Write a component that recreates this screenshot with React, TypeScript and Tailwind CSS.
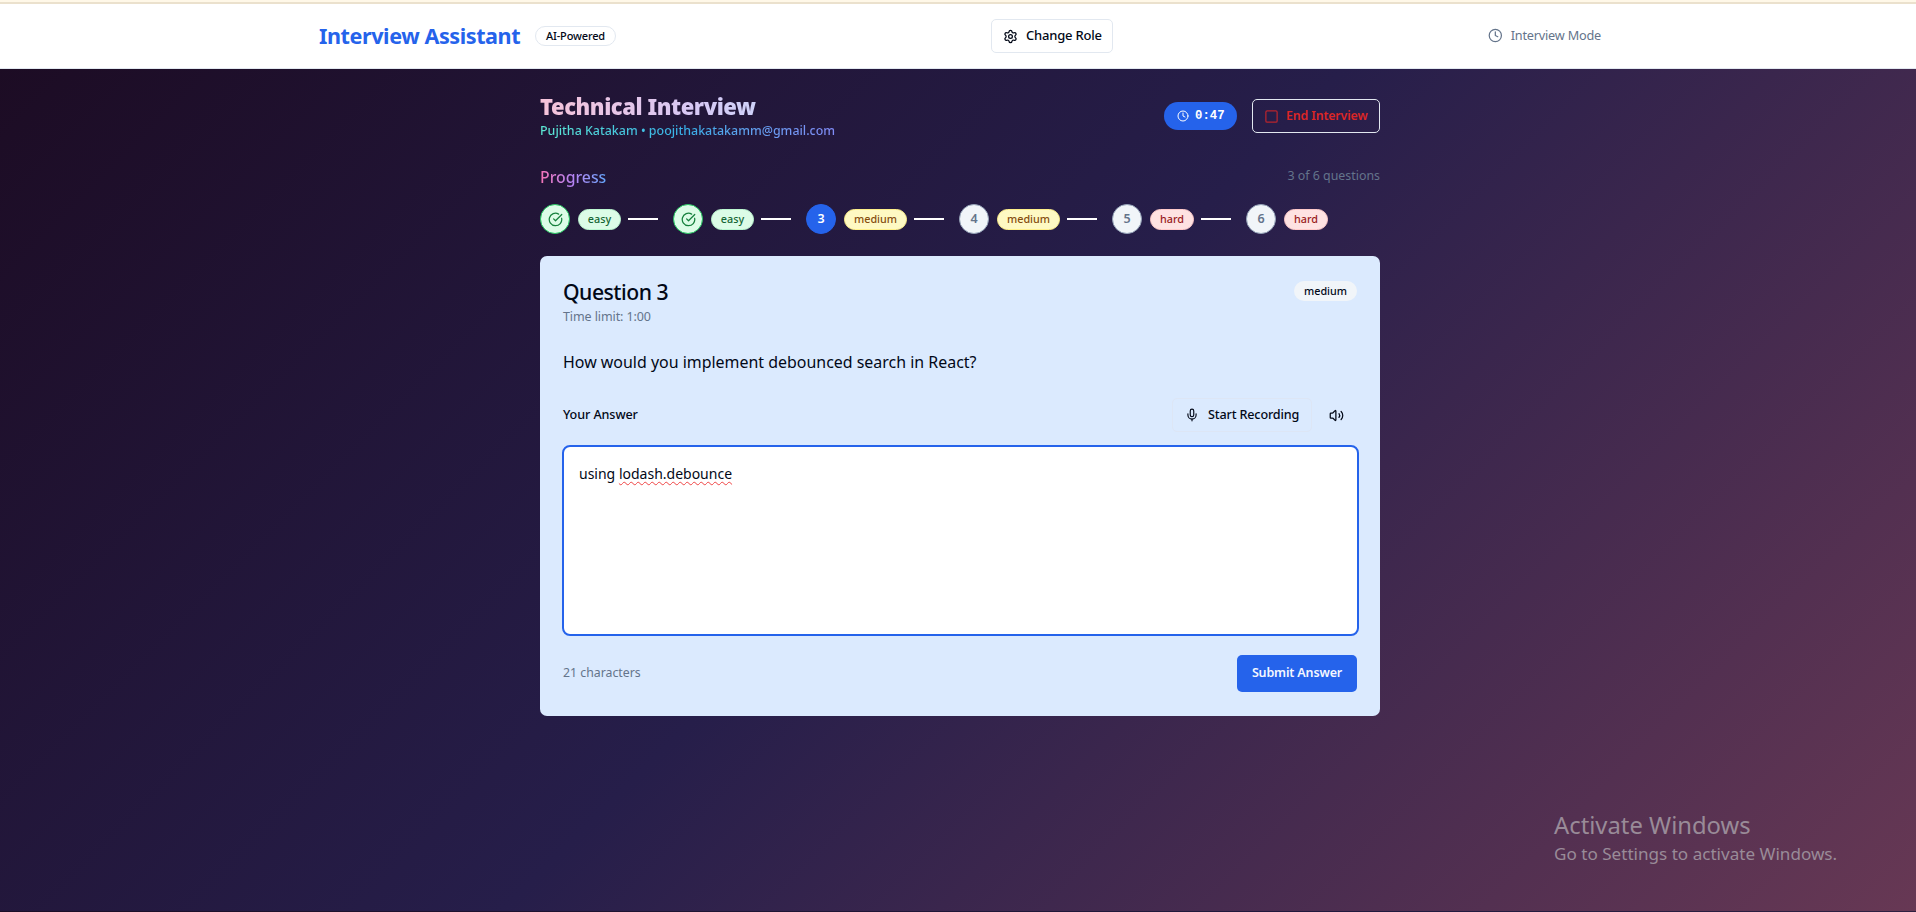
import { Settings, Clock, CircleCheckBig, Mic, Volume2, Square } from "lucide-react";

type Level = "easy" | "medium" | "hard";
type Status = "done" | "current" | "todo";

const steps: { n: number; level: Level; status: Status; gap: string; pill: string }[] = [
  { n: 1, level: "easy", status: "done", gap: "mr-[15px]", pill: "w-[43px]" },
  { n: 2, level: "easy", status: "done", gap: "mr-[15px]", pill: "w-[43px]" },
  { n: 3, level: "medium", status: "current", gap: "mr-[15px]", pill: "w-[63px]" },
  { n: 4, level: "medium", status: "todo", gap: "mr-[15px]", pill: "w-[63px]" },
  { n: 5, level: "hard", status: "todo", gap: "mr-[15px]", pill: "w-[44px]" },
  { n: 6, level: "hard", status: "todo", gap: "", pill: "w-[44px]" },
];

const levelStyle: Record<Level, string> = {
  easy: "border-[#bbf7d0] bg-[#dcfce7] text-[#166534]",
  medium: "border-[#fef08a] bg-[#fef9c3] text-[#854d0e]",
  hard: "border-[#fecaca] bg-[#fee2e2] text-[#991b1b]",
};

const circleStyle: Record<Status, string> = {
  done: "border-[#22c55e] bg-[#dcfce7] text-[#16803d]",
  current: "border-[#2563eb] bg-[#2563eb] text-white",
  todo: "border-[#94a3b8] bg-[#f1f5f9] text-[#64748b]",
};

function Header() {
  return (
    <header className="shrink-0">
      <div className="h-[2px] bg-[#fff8e8]" />
      <div className="h-[2px] bg-[#ebe1cd]" />
      <div className="flex h-[65px] justify-center border-b border-[#e2e8f0] bg-white pl-1">
        <div className="flex w-[1282px] items-center justify-between">
          <div className="flex items-center">
            <h1 className="w-[216px] whitespace-nowrap text-[21.6px] leading-7 font-bold tracking-[-0.43px] text-[#2563eb]">
              Interview Assistant
            </h1>
            <span className="flex h-5 w-[81px] items-center justify-center whitespace-nowrap rounded-full border border-[#e2e8f0] text-[11px] font-medium tracking-[-0.15px] text-[#020817]">
              AI-Powered
            </span>
          </div>
          <button className="flex h-[34px] w-[122px] items-center rounded-[5px] border border-[#e2e8f0] pl-[11px] text-[#020817]">
            <Settings size={15} />
            <span className="ml-2 whitespace-nowrap text-[13px] font-medium tracking-[-0.2px]">Change Role</span>
          </button>
          <div className="flex w-[113px] items-center text-[#64748b]">
            <Clock size={15} />
            <span className="ml-2 whitespace-nowrap text-[12.7px] tracking-[-0.2px]">Interview Mode</span>
          </div>
        </div>
      </div>
    </header>
  );
}

function TitleRow() {
  return (
    <div className="flex items-start justify-between">
      <div>
        <h2 className="w-[300px] whitespace-nowrap bg-linear-to-r from-[#f6c3d9] via-[#d8c8f4] to-[#bfdbfe] bg-clip-text pt-px text-[22px] leading-7 font-black tracking-[-0.45px] text-transparent">
          Technical Interview
        </h2>
        <p className="mt-0.5 w-fit whitespace-nowrap bg-linear-to-r from-[#5eead4] via-[#38aee8] to-[#818cf8] bg-clip-text text-[12.45px] leading-[18px] font-medium text-transparent">
          Pujitha Katakam • poojithakatakamm@gmail.com
        </p>
      </div>
      <div className="mt-2 flex items-center gap-[15px]">
        <div className="flex h-7 w-[73px] items-center rounded-full bg-[#2563eb] pl-[13px] text-white">
          <Clock size={12} />
          <span className="ml-[6px] font-['Liberation_Mono',monospace] text-[12.3px] font-bold">0:47</span>
        </div>
        <button className="flex h-[34px] w-32 items-center rounded-[5px] border border-[#e2e8f0] pl-[11px] text-[#dc2626]">
          <Square size={15} className="opacity-80" />
          <span className="ml-[7px] whitespace-nowrap text-[12.4px] font-semibold tracking-[-0.15px]">End Interview</span>
        </button>
      </div>
    </div>
  );
}

function Progress() {
  return (
    <section className="mt-[25px]">
      <div className="flex h-6 items-center justify-between">
        <h3 className="bg-linear-to-r from-[#f472b6] via-[#b583f5] to-[#60a5fa] bg-clip-text text-[15.8px] leading-6 font-medium text-transparent">
          Progress
        </h3>
        <span className="mb-[2px] text-[12.4px] text-[#64748b]">3 of 6 questions</span>
      </div>
      <div className="mt-[15px] flex items-center">
        {steps.map((s, i) => (
          <div key={s.n} className={"flex items-center " + s.gap}>
            <div
              className={
                "flex size-[30px] items-center justify-center rounded-full border text-[12.5px] font-semibold " +
                circleStyle[s.status]
              }
            >
              {s.status === "done" ? <CircleCheckBig size={15} /> : s.n}
            </div>
            <span
              className={
                "ml-2 flex h-[21px] items-center justify-center rounded-full border text-[10.8px] font-medium " +
                s.pill +
                " " +
                levelStyle[s.level]
              }
            >
              {s.level}
            </span>
            {i < steps.length - 1 && <span className="ml-[7px] h-[2px] w-[30px] bg-white" />}
          </div>
        ))}
      </div>
    </section>
  );
}

function QuestionCard() {
  return (
    <section className="mt-[22px] h-[460px] rounded-[7px] bg-[#dbeafe] px-[23px] text-[#020817]">
      <div className="flex justify-between pt-[22px]">
        <div>
          <h2 className="whitespace-nowrap text-[21.2px] leading-[27px] font-medium tracking-[-0.5px]">Question 3</h2>
          <p className="mt-px whitespace-nowrap text-[12.5px] leading-[21px] tracking-[-0.1px] text-[#64748b]">
            Time limit: 1:00
          </p>
        </div>
        <span className="mt-[3px] flex h-5 w-[63px] items-center justify-center rounded-full bg-[#f1f5f9] text-[10.8px] font-medium">
          medium
        </span>
      </div>
      <p className="mt-[22px] whitespace-nowrap text-[15.94px] leading-[26px]">How would you implement debounced search in React?</p>
      <div className="mt-[23px] flex h-[34px] items-center justify-between">
        <label className="text-[12.6px] font-medium tracking-[-0.1px]">Your Answer</label>
        <div className="flex items-center">
          <button className="flex h-[34px] w-[140px] items-center rounded-[5px] border border-[#dde6f5] pl-3">
            <Mic size={14} />
            <span className="ml-[9px] whitespace-nowrap text-[12.6px] font-medium tracking-[-0.15px]">Start Recording</span>
          </button>
          <button className="flex h-[34px] w-[45px] items-center pl-[17px]">
            <Volume2 size={15} />
          </button>
        </div>
      </div>
      <div className="-mr-[2px] -ml-px mt-[13px] h-[191px] rounded-[8px] border-2 border-[#2563eb] bg-white px-[15px] pt-[15px] text-[14px] leading-6">
        using{" "}
        <span className="underline decoration-[#ef4444] decoration-wavy decoration-1 underline-offset-2">
          lodash.debounce
        </span>
      </div>
      <div className="mt-[19px] flex items-center justify-between">
        <span className="text-[12.3px] text-[#64748b]">21 characters</span>
        <button className="flex h-[37px] w-[120px] items-center justify-center whitespace-nowrap rounded-[5px] bg-[#2563eb] text-[12.5px] font-semibold tracking-[-0.15px] text-[#f3f7ff]">
          Submit Answer
        </button>
      </div>
    </section>
  );
}

export default function App() {
  return (
    <div className="relative flex h-[912px] w-[1916px] flex-col overflow-hidden border-b border-[#1b1330]/40 bg-linear-[135deg] from-[#1c0b22] via-[#261e4a] to-[#673854] font-['Noto_Sans','Open_Sans',sans-serif]">
      <Header />
      <main className="ml-[540px] w-[840px] pt-[22px]">
        <TitleRow />
        <Progress />
        <QuestionCard />
      </main>
      <div className="absolute top-[809px] left-[1554px] whitespace-nowrap text-[#998b98]">
        <div className="text-[23.8px] leading-8">Activate Windows</div>
        <div className="text-[17.1px] leading-[26px]">Go to Settings to activate Windows.</div>
      </div>
    </div>
  );
}
